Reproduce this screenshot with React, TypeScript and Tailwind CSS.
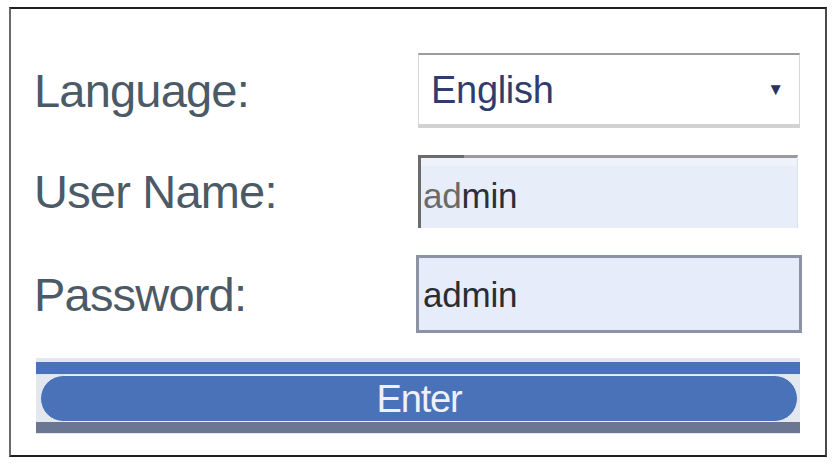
const labelCls = "w-[384px] shrink-0 text-[47px] leading-none text-[#4b5a66] tracking-[-0.8px]";

export default function App() {
  return (
    <div className="w-[832px] h-[464px] bg-white pt-[7px] pl-[9px] font-['Liberation_Sans',Arial,sans-serif]">
      <div className="w-[818px] h-[450px] border-2 border-t-[#1f1f1f] border-b-[#1f1f1f] border-l-[#6a6a6a] border-r-[#4a4a4a] pl-[23px] pt-[44px] flex flex-col">
        <div className="flex items-center">
          <div className={labelCls}>Language:</div>
          <div className="w-[382px] h-[75px] bg-white border border-[#d6d6d6] border-t-2 border-t-[#9c9c9c] border-b-4 border-b-[#d2d2d2] flex items-center justify-between pl-[12px] pr-[15px]">
            <span className="text-[38px] leading-none text-[#2f3d6e] tracking-[-0.3px]">English</span>
            <span className="text-[17px] leading-none text-[#263463]">▼</span>
          </div>
        </div>

        <div className="flex items-center mt-[27px]">
          <div className={labelCls}>User Name:</div>
          <div className="relative w-[380px] h-[73px] bg-[#e8eef9] border-t-[3px] border-t-[#9a9a9a] border-l-[3px] border-l-[#6b6b6b] border-r border-r-[#dde3ee] flex items-center pl-[2px] pt-[4px] shadow-[inset_0_8px_0_#eef2fb]">
            <div className="absolute -top-[3px] -left-[3px] w-[46px] h-[3px] bg-[#6b6b6b]" />
            <span className="text-[35px] leading-none tracking-[-0.2px]">
              <span className="text-[#6a6a6a]">ad</span>
              <span className="text-[#2c2f3a]">min</span>
            </span>
          </div>
        </div>

        <div className="flex items-center mt-[27px]">
          <div className="w-[382px] shrink-0 text-[47px] leading-none text-[#4b5a66] tracking-[-0.8px]">Password:</div>
          <div className="w-[386px] h-[78px] bg-[#e6ecf9] border-[3px] border-[#8b93a5] flex items-center pl-[4px]">
            <span className="text-[35px] leading-none text-[#2a2d33] tracking-[-0.2px]">admin</span>
          </div>
        </div>

        <div className="mt-[25px] ml-[2px] w-[764px] h-[76px] bg-[#e3e7ee] flex flex-col pt-[4px]">
          <div className="h-[13px] bg-[#4a72bb] border-b border-b-[#dbe3f2]" />
          <div className="ml-[4px] mr-[2px] h-[47px] rounded-full bg-[#4a72b9] border border-[#e9eef7] flex items-center justify-center">
            <span className="text-[38px] leading-none text-[#eef1f7] tracking-[-1.2px]">Enter</span>
          </div>
          <div className="h-[11px] bg-[#6b7792]" />
        </div>
      </div>
    </div>
  );
}
